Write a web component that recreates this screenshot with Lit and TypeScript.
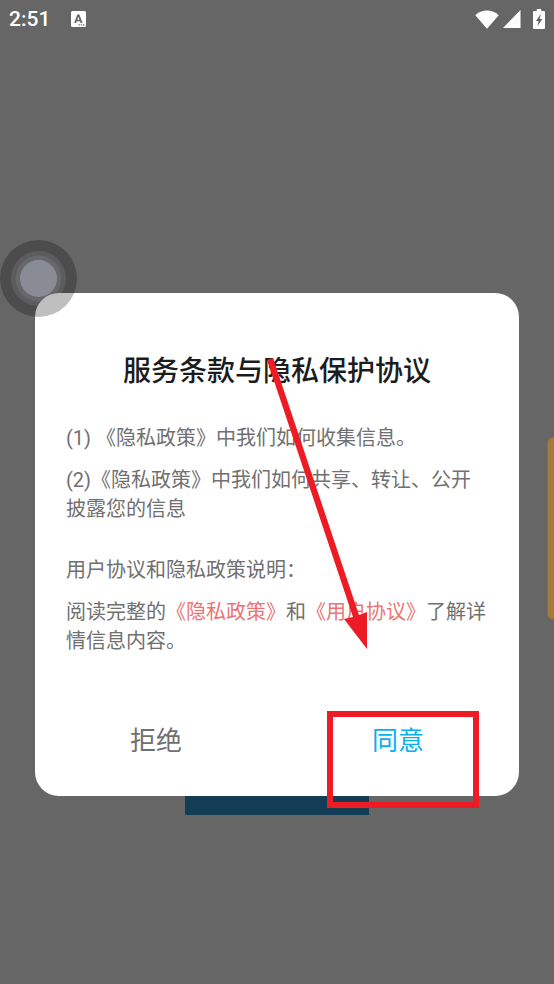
import { LitElement, html, css } from "lit";
import { customElement } from "lit/decorators.js";

@customElement("status-bar")
class StatusBar extends LitElement {
  static styles = css`
    :host {
      display: flex;
      align-items: center;
      justify-content: space-between;
      height: 38px;
      padding: 0 9px;
      color: #fff;
    }
    .group {
      display: flex;
      align-items: center;
    }
    .left {
      gap: 21px;
    }
    .right {
      gap: 4px;
    }
    .time {
      font: 500 21px/38px Roboto, sans-serif;
    }
    .battery {
      margin-left: 8px;
    }
    svg {
      display: block;
      fill: currentColor;
    }
  `;
  render() {
    return html`
      <div class="group left">
        <span class="time">2:51</span>
        <svg width="15" height="16" viewBox="0 0 15 16" aria-hidden="true">
          <path
            fill-rule="evenodd"
            d="M1.5 0h12A1.5 1.5 0 0 1 15 1.500v13a1.500 1.500 0 0 1-1.500 1.500h-12A1.500 1.500 0 0 1 0 14.500v-13A1.500 1.500 0 0 1 1.500 0zM6.300 3.500L3.200 12h1.900l.6-1.700h3.300l.6 1.700h1.900L8.400 3.500zm1.050 2.200l1.050 3.100H6.300zM7.500 13.300v1.200h1.300v-1.200zm2.300 0v1.200h1.300v-1.200zm2.300 0v1.200h1.300v-1.200z"
          />
        </svg>
      </div>
      <div class="group right">
        <svg width="24" height="19" viewBox="0 0 24 19" aria-hidden="true">
          <path d="M.3 5.200C3.500 2.200 7.500.6 12 .6s8.500 1.600 11.700 4.600L12 18.800z" />
        </svg>
        <svg width="18" height="18" viewBox="0 0 18 18" aria-hidden="true">
          <path d="M17.500 0v18H0z" />
        </svg>
        <svg class="battery" width="12" height="20" viewBox="0 0 12 20" aria-hidden="true">
          <path
            fill-rule="evenodd"
            d="M3.800 0h4.400v2H11a1 1 0 0 1 1 1v16a1 1 0 0 1-1 1H1a1 1 0 0 1-1-1V3a1 1 0 0 1 1-1h2.800zM7.800 4.800L3 12h2.500l-1 5.200L9.300 10H6.700z"
          />
        </svg>
      </div>
    `;
  }
}

@customElement("terms-dialog")
class TermsDialog extends LitElement {
  static styles = css`
    :host {
      display: block;
      position: relative;
      background: #fff;
      border-radius: 24px;
      color: #707070;
      font-family: Roboto, "Noto Sans CJK SC", sans-serif;
    }
    h1 {
      margin: 0;
      padding-top: 59px;
      text-align: center;
      color: #1c1c1c;
      font-size: 28px;
      font-weight: 500;
      line-height: 40px;
    }
    .body {
      padding: 32px 31px 0;
      font-size: 20px;
      line-height: 29px;
    }
    p {
      margin: 0 0 13px;
    }
    .gap {
      margin-bottom: 32px;
    }
    a {
      color: #ea7474;
      text-decoration: none;
    }
    .actions {
      display: grid;
      grid-template-columns: 1fr 1fr;
      padding-top: 16px;
    }
    button {
      height: 111px;
      margin: 0;
      padding: 0;
      border: 0;
      background: none;
      color: inherit;
      font: 400 26px/40px Roboto, "Noto Sans CJK SC", sans-serif;
    }
    .agree {
      color: #06b0f2;
    }
    .arrow {
      position: absolute;
      top: 64px;
      left: 230px;
      fill: #ed1c24;
      pointer-events: none;
    }
    .frame {
      position: absolute;
      right: 40px;
      bottom: -12px;
      width: 152px;
      height: 97px;
      box-sizing: border-box;
      border: 6px solid #ed1c24;
      pointer-events: none;
    }
  `;
  render() {
    return html`
      <h1 id="title">服务条款与隐私保护协议</h1>
      <div class="body">
        <p>(1) 《隐私政策》中我们如何收集信息。</p>
        <p class="gap">(2)《隐私政策》中我们如何共享、转让、公开披露您的信息</p>
        <p>用户协议和隐私政策说明：</p>
        <p>阅读完整的<a href="#privacy">《隐私政策》</a>和<a href="#terms">《用户协议》</a>了解详情信息内容。</p>
      </div>
      <div class="actions">
        <button type="button">拒绝</button>
        <button type="button" class="agree">同意</button>
      </div>
      <svg class="arrow" width="110" height="296" viewBox="0 0 110 296" aria-hidden="true">
        <path d="M2 3L8 1L94 258L102 255L102 292L79 262L88 260z" />
      </svg>
      <div class="frame"></div>
    `;
  }
}

@customElement("app-root")
class AppRoot extends LitElement {
  static styles = css`
    :host {
      display: block;
      position: relative;
      min-height: 100vh;
      overflow: hidden;
      background: #666;
    }
    main {
      position: relative;
      padding: 255px 35px 0;
    }
    .under {
      position: absolute;
      left: calc(50% - 92px);
      bottom: -19px;
      width: 184px;
      height: 50px;
      background: #123d54;
    }
    .edge {
      position: absolute;
      top: 437px;
      right: -8px;
      width: 13px;
      height: 181px;
      border: 1px solid #8a6a40;
      border-radius: 6px;
      background: #a67a3b;
    }
    .ball {
      position: absolute;
      top: 240px;
      left: 0;
    }
  `;
  render() {
    return html`
      <status-bar></status-bar>
      <main>
        <div class="under"></div>
        <terms-dialog role="dialog" aria-label="服务条款与隐私保护协议"></terms-dialog>
      </main>
      <div class="edge"></div>
      <svg class="ball" width="77" height="77" viewBox="0 0 77 77" aria-hidden="true">
        <circle cx="38.500" cy="38.500" r="38.500" fill="#000" fill-opacity=".25" />
        <circle cx="38.500" cy="38.500" r="27.500" fill="#c0c0c8" fill-opacity=".14" />
        <circle cx="38.500" cy="38.500" r="23" fill="#b0b0d0" fill-opacity=".14" />
        <circle cx="38.500" cy="38.500" r="18.500" fill="#b4b8c8" fill-opacity=".45" />
      </svg>
    `;
  }
}
